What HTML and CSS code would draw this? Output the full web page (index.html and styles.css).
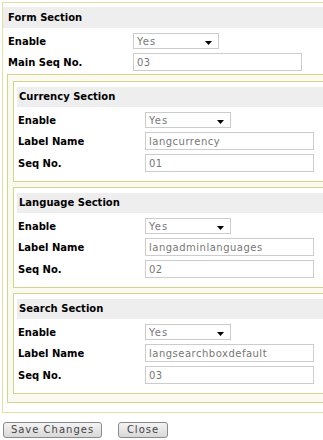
FILE: index.html
```html
<!DOCTYPE html>
<html lang="en">
<head>
    <meta charset="UTF-8">
    <title>Form Section</title>
    <link rel="stylesheet" href="styles.css">
</head>
<body>
    <div class="form-box">
        <div class="section-head">Form Section</div>
        <div class="row row-first">
            <label class="label">Enable</label>
            <div class="select"><span>Yes</span><svg width="7" height="4" viewBox="0 0 7 4"><path d="M0 0h7L3.5 4z" fill="#000"/></svg></div>
        </div>
        <div class="row">
            <label class="label">Main Seq No.</label>
            <input class="field" type="text" value="03">
        </div>

        <div class="group">
            <div class="sub-box">
                <div class="section-head">Currency Section</div>
                <div class="row row-first">
                    <label class="label">Enable</label>
                    <div class="select"><span>Yes</span><svg width="7" height="4" viewBox="0 0 7 4"><path d="M0 0h7L3.5 4z" fill="#000"/></svg></div>
                </div>
                <div class="row">
                    <label class="label">Label Name</label>
                    <input class="field" type="text" value="langcurrency">
                </div>
                <div class="row">
                    <label class="label">Seq No.</label>
                    <input class="field" type="text" value="01">
                </div>
            </div>

            <div class="sub-box">
                <div class="section-head">Language Section</div>
                <div class="row row-first">
                    <label class="label">Enable</label>
                    <div class="select"><span>Yes</span><svg width="7" height="4" viewBox="0 0 7 4"><path d="M0 0h7L3.5 4z" fill="#000"/></svg></div>
                </div>
                <div class="row">
                    <label class="label">Label Name</label>
                    <input class="field" type="text" value="langadminlanguages">
                </div>
                <div class="row">
                    <label class="label">Seq No.</label>
                    <input class="field" type="text" value="02">
                </div>
            </div>

            <div class="sub-box">
                <div class="section-head">Search Section</div>
                <div class="row row-first">
                    <label class="label">Enable</label>
                    <div class="select"><span>Yes</span><svg width="7" height="4" viewBox="0 0 7 4"><path d="M0 0h7L3.5 4z" fill="#000"/></svg></div>
                </div>
                <div class="row">
                    <label class="label">Label Name</label>
                    <input class="field" type="text" value="langsearchboxdefault">
                </div>
                <div class="row">
                    <label class="label">Seq No.</label>
                    <input class="field" type="text" value="03">
                </div>
            </div>
        </div>
    </div>

    <div class="actions">
        <button class="btn" type="button">Save Changes</button>
        <button class="btn btn-close" type="button">Close</button>
    </div>
</body>
</html>
```

FILE: styles.css
```css
body {
    margin: 0;
    background: #fff;
    font-family: "DejaVu Sans", Verdana, sans-serif;
    font-size: 10px;
    color: #000;
    overflow: hidden;
}

.form-box {
    margin: 2px 0 0 2px;
    border: 1px solid #e0e0a4;
    border-right: none;
    padding: 4px 0 9px 0;
}

.section-head {
    background: #eeeeee;
    height: 21px;
    line-height: 21px;
    padding-left: 5px;
    font-weight: bold;
}

.row {
    display: flex;
    align-items: center;
    padding-top: 4px;
    padding-left: 5px;
}

.row-first {
    padding-top: 5px;
}

.label {
    width: 125px;
    font-weight: bold;
}

.select {
    border: 1px solid #cccccc;
    display: flex;
    align-items: center;
    justify-content: space-between;
    padding: 0 6px 0 3px;
    box-sizing: border-box;
    width: 86px;
    height: 16px;
    color: #777;
    letter-spacing: 1px;
}

.select svg {
    margin-top: 4px;
}

.field {
    width: 169px;
    height: 18px;
    box-sizing: border-box;
    border: 1px solid #cccccc;
    padding: 0 3px;
    font-family: "DejaVu Sans", Verdana, sans-serif;
    font-size: 10px;
    color: #777;
    letter-spacing: 0.5px;
    margin: 0;
}

.group {
    margin: 3px 0 0 4px;
    border: 1px solid #d4d48e;
    border-right: none;
    background: #fafaf0;
    padding: 6px 0 8px 5px;
    display: flex;
    flex-direction: column;
    gap: 5px;
}

.sub-box {
    border: 1px solid #d4d48e;
    border-right: none;
    background: #fff;
    padding: 5px 0 9px 3px;
}

.sub-box .section-head {
    height: 20px;
    line-height: 20px;
    padding-left: 2px;
}

.sub-box .row {
    padding-left: 1px;
}

.sub-box .label {
    width: 127px;
}

.actions {
    display: flex;
    gap: 16px;
    padding: 9px 0 0 3px;
}

.btn {
    height: 16px;
    padding: 0;
    width: 99px;
    border: 1px solid #8a8a8a;
    border-radius: 3px;
    background: linear-gradient(#f4f4f4, #d8d8d8);
    font-family: "DejaVu Sans", Verdana, sans-serif;
    font-size: 10px;
    color: #444;
    letter-spacing: 1px;
    line-height: 14px;
}

.btn-close {
    width: 50px;
}
```
